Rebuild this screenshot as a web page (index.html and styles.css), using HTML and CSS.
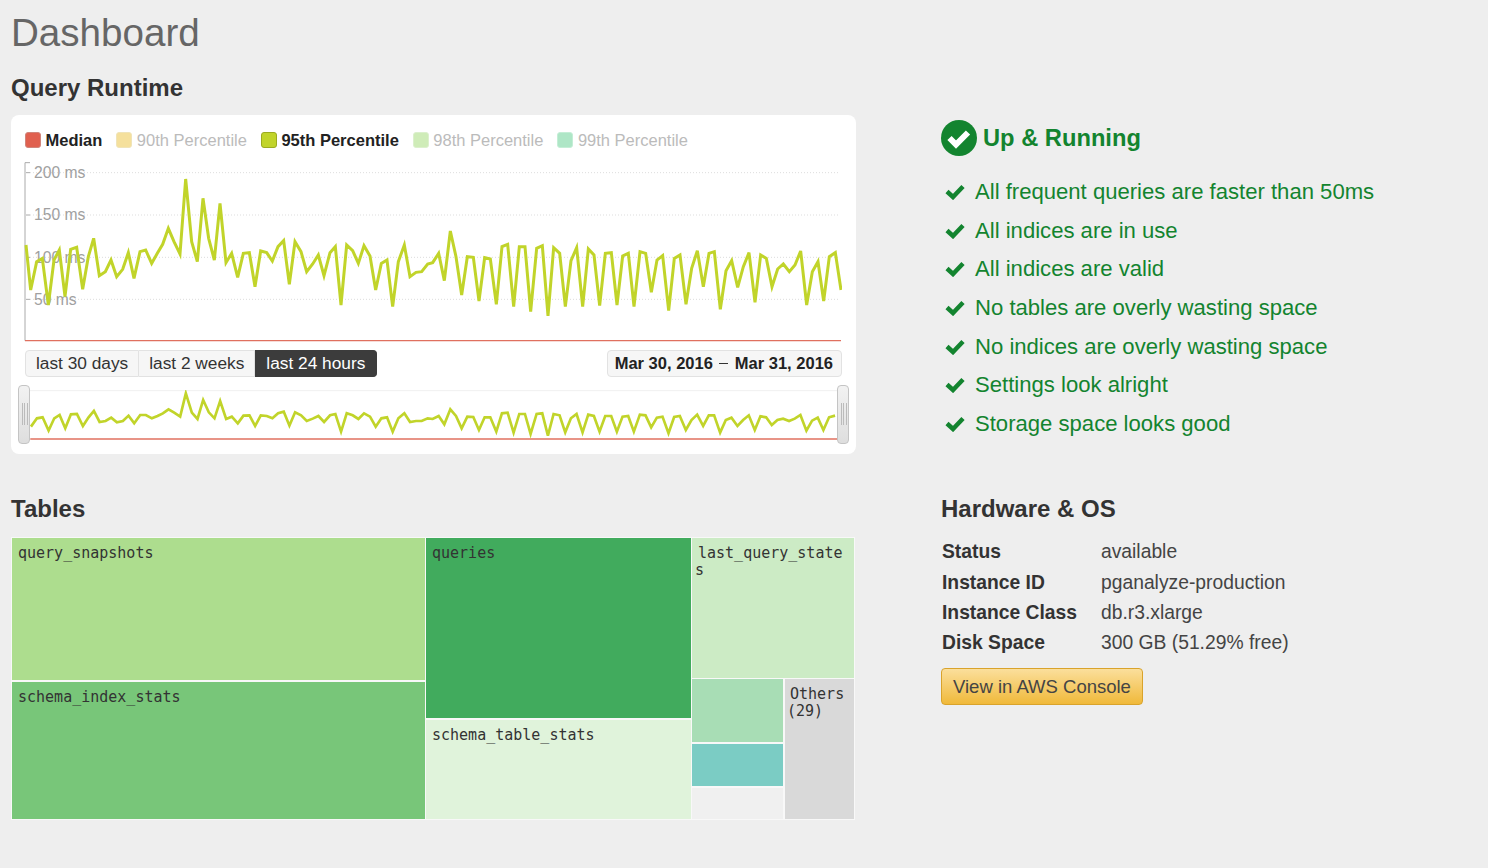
FILE: index.html
```html
<!DOCTYPE html>
<html lang="en">
<head>
    <meta charset="UTF-8">
    <title>Dashboard</title>
    <link rel="stylesheet" href="styles.css">
</head>
<body>
    <h1>Dashboard</h1>

    <div class="layout">
        <section class="runtime">
            <h2>Query Runtime</h2>
            <div class="card">
                <div class="legend">
                    <span class="legend-item"><i class="swatch swatch-median"></i>Median</span>
                    <span class="legend-item off"><i class="swatch swatch-90"></i>90th Percentile</span>
                    <span class="legend-item"><i class="swatch swatch-95"></i>95th Percentile</span>
                    <span class="legend-item off"><i class="swatch swatch-98"></i>98th Percentile</span>
                    <span class="legend-item off"><i class="swatch swatch-99"></i>99th Percentile</span>
                </div>

                <svg class="chart" viewBox="72 150 2454 555" width="818" height="185">
                    <g class="grid">
                        <line x1="90" x2="2520" y1="188" y2="188"></line>
                        <line x1="90" x2="2520" y1="315" y2="315"></line>
                        <line x1="90" x2="2520" y1="442" y2="442"></line>
                        <line x1="90" x2="2520" y1="568" y2="568"></line>
                    </g>
                    <path class="axis" d="M90 158H75V692"></path>
                    <path class="axis" d="M78 188H90M78 315H90M78 442H90M78 568H90"></path>
                    <g class="ticks">
                        <text x="102" y="203">200 ms</text>
                        <text x="102" y="331">150 ms</text>
                        <text x="102" y="458">100 ms</text>
                        <text x="102" y="584">50 ms</text>
                    </g>
                    <line class="median" x1="75" x2="2523" y1="692" y2="692"></line>
                    <polyline class="series" points="78,405 92,540 110,455 127,445 145,585 162,450 178,420 195,560 212,418 230,412 248,538 265,440 281,385 298,497 316,485 333,450 350,500 368,478 385,428 402,505 420,425 437,420 455,460 472,430 488,403 505,355 522,395 540,432 557,207 575,395 592,455 609,265 626,385 643,450 660,280 678,458 695,430 713,502 730,430 748,428 765,530 782,423 800,428 817,453 834,410 851,392 868,523 885,395 903,425 920,485 938,462 955,435 972,497 990,428 1006,410 1023,585 1040,405 1058,422 1075,460 1092,407 1110,438 1127,540 1144,460 1161,450 1178,590 1195,455 1213,405 1230,500 1248,487 1265,485 1283,462 1298,458 1316,430 1333,512 1351,363 1368,440 1385,555 1402,440 1420,442 1437,573 1454,443 1471,447 1489,583 1506,410 1523,403 1541,590 1558,410 1575,410 1592,605 1610,415 1627,407 1644,618 1661,413 1679,430 1696,590 1713,452 1730,413 1748,590 1765,417 1782,435 1799,587 1816,430 1834,428 1851,585 1868,438 1885,430 1902,590 1920,425 1937,430 1954,547 1971,450 1988,437 2006,602 2023,445 2040,435 2058,583 2075,475 2092,422 2110,530 2127,430 2143,425 2161,598 2178,482 2195,452 2213,532 2230,470 2247,428 2265,577 2282,435 2299,445 2316,530 2333,477 2350,462 2368,485 2385,465 2402,423 2420,585 2437,485 2454,455 2471,573 2488,440 2506,428 2523,540"></polyline>
                </svg>

                <div class="controls">
                    <div class="ranges">
                        <button class="range">last 30 days</button>
                        <button class="range">last 2 weeks</button>
                        <button class="range active">last 24 hours</button>
                    </div>
                    <div class="dates">Mar 30, 2016 <span class="dash"></span> Mar 31, 2016</div>
                </div>

                <div class="overview">
                    <svg class="overview-chart" viewBox="72 150 2454 160" width="818" height="53.3">
                        <line class="overview-top" x1="72" x2="2526" y1="152" y2="152"></line>
                        <line class="median" x1="90" x2="2523" y1="297" y2="297"></line>
                        <polyline class="series thin" points="92,260 110,235 127,232 145,272 162,235 178,225 195,265 212,223 230,222 248,258 265,232 281,213 298,246 316,243 333,233 350,247 368,243 385,227 402,250 420,225 437,225 455,235 472,228 488,220 505,208 522,218 540,230 557,160 575,218 592,237 609,180 626,217 643,235 660,183 678,237 695,230 713,250 730,227 748,226 765,258 782,226 800,228 817,235 834,220 851,215 868,257 885,217 903,226 920,243 938,236 955,228 972,246 990,226 1006,222 1023,275 1040,220 1058,226 1075,237 1092,220 1110,230 1127,260 1144,235 1161,232 1178,275 1195,235 1213,220 1230,246 1248,243 1265,243 1283,235 1298,237 1316,228 1333,253 1351,208 1368,228 1385,265 1402,230 1420,231 1437,270 1454,232 1471,232 1489,275 1506,220 1523,218 1541,278 1558,222 1575,222 1592,282 1610,222 1627,220 1644,287 1661,222 1679,226 1696,277 1713,235 1730,222 1748,277 1765,224 1782,228 1799,275 1816,228 1834,228 1851,275 1868,230 1885,228 1902,275 1920,224 1937,226 1954,262 1971,233 1988,230 2006,280 2023,231 2040,228 2058,270 2075,240 2092,224 2110,258 2127,226 2143,226 2161,278 2178,240 2195,233 2213,258 2230,240 2247,226 2265,270 2282,229 2299,232 2316,255 2333,240 2350,236 2368,243 2385,236 2402,225 2420,272 2437,242 2454,233 2471,270 2488,232 2506,227"></polyline>
                    </svg>
                    <span class="handle handle-left"></span>
                    <span class="handle handle-right"></span>
                </div>
            </div>
        </section>

        <section class="status">
            <h2 class="status-title">
                <svg class="status-icon" viewBox="0 0 36 36" width="36" height="36">
                    <circle cx="18" cy="18" r="18" fill="#13842f"></circle>
                    <path d="M8.5 18l6.5 6.5L27 12.5" fill="none" stroke="#fff" stroke-width="6"></path>
                </svg>
                Up &amp; Running
            </h2>
            <ul class="checks">
                <li><svg class="check" viewBox="0 0 20 16" width="20" height="16"><path d="M2 7.5l6 5.5L18 2.5"></path></svg>All frequent queries are faster than 50ms</li>
                <li><svg class="check" viewBox="0 0 20 16" width="20" height="16"><path d="M2 7.5l6 5.5L18 2.5"></path></svg>All indices are in use</li>
                <li><svg class="check" viewBox="0 0 20 16" width="20" height="16"><path d="M2 7.5l6 5.5L18 2.5"></path></svg>All indices are valid</li>
                <li><svg class="check" viewBox="0 0 20 16" width="20" height="16"><path d="M2 7.5l6 5.5L18 2.5"></path></svg>No tables are overly wasting space</li>
                <li><svg class="check" viewBox="0 0 20 16" width="20" height="16"><path d="M2 7.5l6 5.5L18 2.5"></path></svg>No indices are overly wasting space</li>
                <li><svg class="check" viewBox="0 0 20 16" width="20" height="16"><path d="M2 7.5l6 5.5L18 2.5"></path></svg>Settings look alright</li>
                <li><svg class="check" viewBox="0 0 20 16" width="20" height="16"><path d="M2 7.5l6 5.5L18 2.5"></path></svg>Storage space looks good</li>
            </ul>
        </section>

        <section class="tables">
            <h2>Tables</h2>
            <div class="treemap">
                <div class="tm-col tm-col-a">
                    <div class="tm-cell c-snapshots">query_snapshots</div>
                    <div class="tm-cell c-index">schema_index_stats</div>
                </div>
                <div class="tm-col tm-col-b">
                    <div class="tm-cell c-queries">queries</div>
                    <div class="tm-cell c-table">schema_table_stats</div>
                </div>
                <div class="tm-col tm-col-c">
                    <div class="tm-cell c-last">last_query_state<br><span class="wrapped">s</span></div>
                    <div class="tm-row">
                        <div class="tm-col tm-small">
                            <div class="tm-cell c-s1"></div>
                            <div class="tm-cell c-s2"></div>
                            <div class="tm-cell c-s3"></div>
                        </div>
                        <div class="tm-cell c-others">Others<br><span class="wrapped">(29)</span></div>
                    </div>
                </div>
            </div>
        </section>

        <section class="hardware">
            <h2>Hardware &amp; OS</h2>
            <dl class="specs">
                <dt>Status</dt><dd>available</dd>
                <dt>Instance ID</dt><dd>pganalyze-production</dd>
                <dt>Instance Class</dt><dd>db.r3.xlarge</dd>
                <dt>Disk Space</dt><dd>300 GB (51.29% free)</dd>
            </dl>
            <a class="aws-button">View in AWS Console</a>
        </section>
    </div>
</body>
</html>
```

FILE: styles.css
```css
/* Global Styles */
html, body {
    margin: 0;
    padding: 0;
    background: #eeeeee;
    font-family: "Liberation Sans", Arial, sans-serif;
    color: #333;
}

body {
    padding: 0 11px;
}

h1 {
    margin: 0;
    padding-top: 11px;
    font-size: 38.6px;
    line-height: 44px;
    font-weight: 400;
    color: #666;
}

h2 {
    margin: 0;
    font-size: 24px;
    line-height: 28px;
    font-weight: 700;
    color: #333;
}

.layout {
    display: grid;
    grid-template-columns: 845px 1fr;
    column-gap: 85px;
    margin-top: 19px;
}

/* Runtime card */
.card {
    position: relative;
    height: 339px;
    box-sizing: border-box;
    margin-top: 13px;
    padding: 15px 14px 0 14px;
    background: #fff;
    border-radius: 8px;
}

.legend {
    display: flex;
    height: 20px;
    align-items: center;
    gap: 14px;
    font-size: 16.5px;
    font-weight: 700;
    color: #222;
}

.legend-item {
    display: flex;
    align-items: center;
    gap: 4.5px;
}

.legend-item.off {
    font-weight: 400;
    color: #bbb;
}

.swatch {
    width: 16px;
    height: 16px;
    box-sizing: border-box;
    border-radius: 3px;
    border: 1px solid;
}

.swatch-median { background: #e0604f; border-color: #d0857b; }
.swatch-90 { background: #f5e09c; border-color: #f0e4b8; }
.swatch-95 { background: #c1d42a; border-color: #9bab20; }
.swatch-98 { background: #cfecb8; border-color: #dcf0cd; }
.swatch-99 { background: #aee6c6; border-color: #c4eed6; }

.chart {
    display: block;
    margin: 10px 0 0 -1px;
}

.grid line {
    stroke: #ddd;
    stroke-width: 3;
    stroke-dasharray: 3 6;
}

.axis {
    fill: none;
    stroke: #aaa;
    stroke-width: 3;
}

.ticks text {
    font-family: "Liberation Sans", Arial, sans-serif;
    font-size: 47px;
    fill: #a0a0a0;
}

.median {
    stroke: #e0705f;
    stroke-width: 4;
}

.series {
    fill: none;
    stroke: #c1d42a;
    stroke-width: 9;
    stroke-linejoin: miter;
}

.series.thin {
    stroke-width: 8;
}

.controls {
    display: flex;
    justify-content: space-between;
    margin: 5px 0 0 0;
}

.ranges {
    display: flex;
}

.range {
    height: 27px;
    box-sizing: border-box;
    padding: 0 10px;
    border: 1px solid #e2e2e2;
    border-left-width: 0;
    background: #f6f6f6;
    font-family: "Liberation Sans", Arial, sans-serif;
    font-size: 17.3px;
    color: #333;
    white-space: nowrap;
}

.range:first-child {
    border-left-width: 1px;
    border-radius: 4px 0 0 4px;
}

.range.active {
    padding: 0 11px;
    border-color: #3c3c3c;
    border-radius: 0 4px 4px 0;
    background: #3c3c3c;
    color: #fff;
}

.dates {
    display: flex;
    align-items: center;
    gap: 6.5px;
    height: 27px;
    box-sizing: border-box;
    padding: 0 8px 0 7px;
    border: 1px solid #e2e2e2;
    border-radius: 4px;
    background: #f6f6f6;
    font-size: 16.5px;
    font-weight: 700;
    color: #222;
    white-space: nowrap;
}

.dash {
    width: 9px;
    height: 1px;
    background: #333;
}

.overview {
    position: relative;
    margin: 13px 0 0 -1px;
}

.overview-chart {
    display: block;
}

.overview-top {
    stroke: #f0f0f0;
    stroke-width: 3;
}

.handle {
    position: absolute;
    top: -5px;
    width: 12px;
    height: 59px;
    box-sizing: border-box;
    border: 1px solid #c4c4c4;
    border-radius: 4px;
    background: linear-gradient(#f2f2f2, #dedede);
}

.handle::after {
    content: "";
    position: absolute;
    left: 3px;
    top: 17px;
    width: 4px;
    height: 22px;
    border: solid #bbb;
    border-width: 0 1px;
    background: linear-gradient(to right, transparent 1px, #bbb 1px, #bbb 2px, transparent 2px);
}

.handle-left { left: -6px; }
.handle-right { right: -7px; }

/* Status */
.status {
    padding-top: 46px;
}

.status-title {
    display: flex;
    align-items: center;
    gap: 6px;
    height: 36px;
    font-size: 23.7px;
    color: #13842f;
}

.status-icon {
    flex: none;
}

.checks {
    margin: 17px 0 0 0;
    padding: 0;
    list-style: none;
}

.checks li {
    display: flex;
    align-items: center;
    gap: 10px;
    height: 38.6px;
    padding-left: 4px;
    font-size: 22.1px;
    color: #13842f;
}

.check {
    flex: none;
}

.check path {
    fill: none;
    stroke: #13842f;
    stroke-width: 4.5;
}

/* Treemap */
.tables {
    margin-top: 41px;
}

.treemap {
    display: flex;
    gap: 1px;
    width: 844px;
    height: 283px;
    box-sizing: border-box;
    margin-top: 14px;
    padding: 1px;
    background: #f8f8f8;
}

.tm-col {
    display: flex;
    flex-direction: column;
    gap: 2px;
}

.tm-col-a { width: 413px; }
.tm-col-b { width: 265px; }
.tm-col-c { flex: 1; gap: 1px; }

.tm-row {
    display: flex;
    flex: 1;
    gap: 2px;
}

.tm-small {
    width: 91px;
}

.tm-cell {
    box-sizing: border-box;
    padding: 7px 6px 0;
    font-family: "DejaVu Sans Mono", monospace;
    font-size: 15px;
    line-height: 17px;
    color: #333;
}

.wrapped {
    margin-left: -3px;
}

.c-snapshots { height: 142px; background: #addd8e; }
.c-index { flex: 1; background: #78c679; }
.c-queries { height: 180px; background: #41ab5d; }
.c-table { flex: 1; background: #e0f3db; }
.c-last { height: 140px; background: #ccebc5; }
.c-s1 { height: 63px; background: #a8ddb5; }
.c-s2 { height: 42px; background: #7bccc4; }
.c-s3 { flex: 1; background: #f0f0f0; }
.c-others { flex: 1; padding-left: 5px; background: #d9d9d9; }

/* Hardware */
.hardware {
    margin-top: 41px;
}

.specs {
    display: grid;
    grid-template-columns: 159px 1fr;
    grid-auto-rows: 30.4px;
    align-items: center;
    margin: 14px 0 0 1px;
    font-size: 19.3px;
}

.specs dt {
    font-weight: 700;
}

.specs dd {
    margin: 0;
    color: #444;
}

.aws-button {
    display: inline-block;
    margin-top: 9px;
    padding: 0 11px;
    height: 37px;
    line-height: 35px;
    box-sizing: border-box;
    border: 1px solid #d9a32b;
    border-radius: 4px;
    background: linear-gradient(#fbdf9c, #f0b93a);
    font-size: 18.5px;
    color: #444;
}
```
